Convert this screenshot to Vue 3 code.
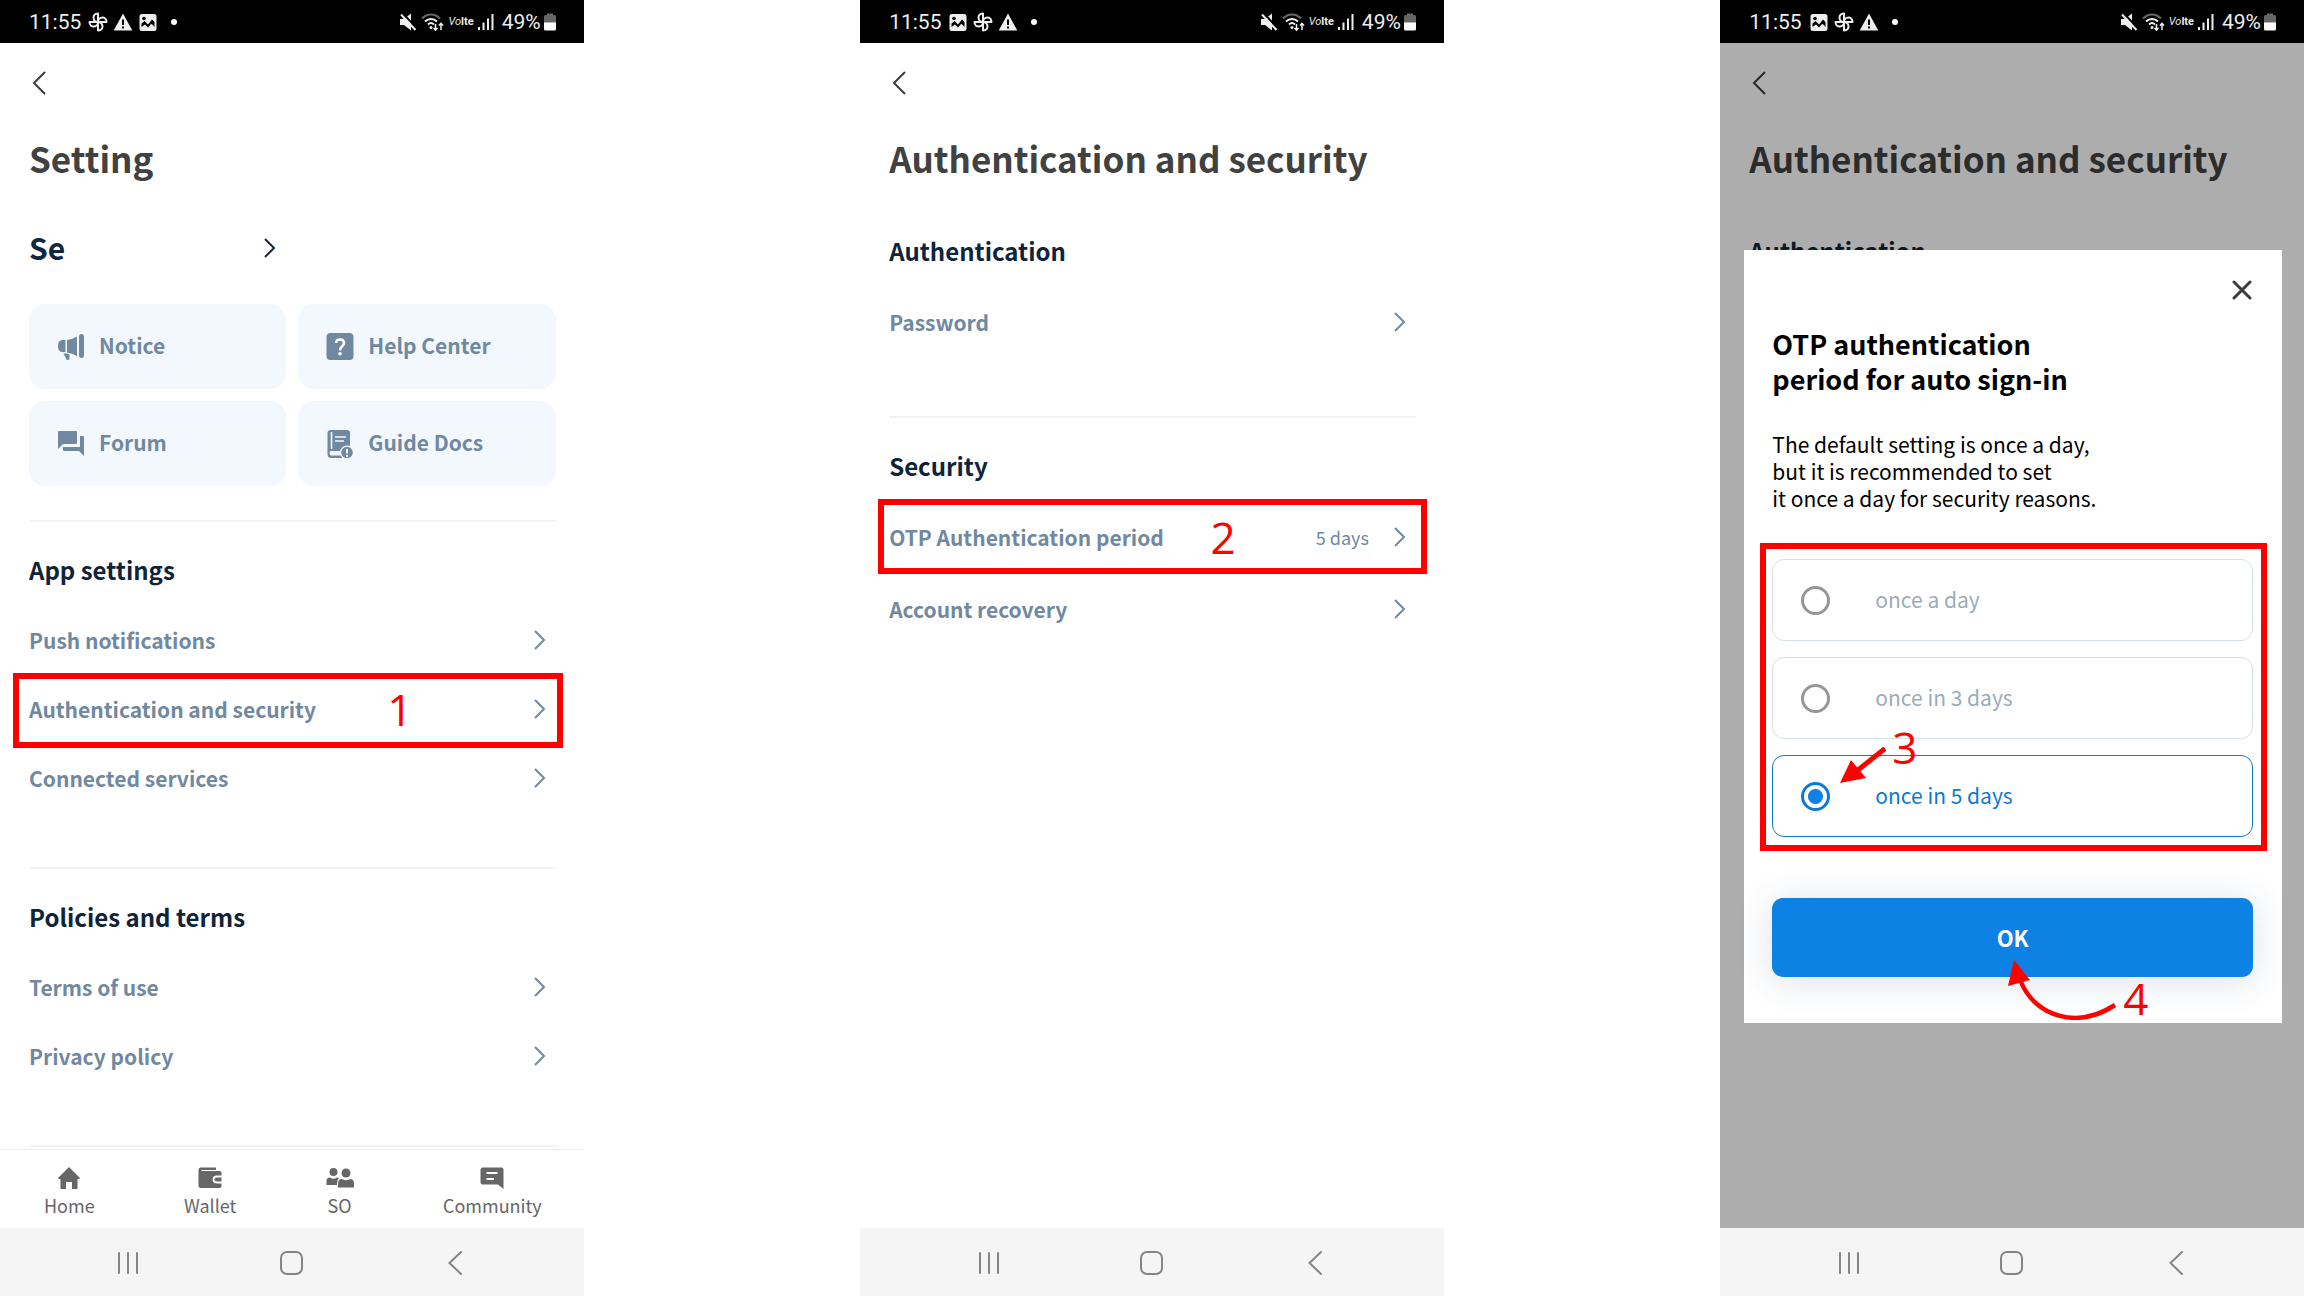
<script setup>
import { ref } from 'vue'

const authSections = [
  {
    title: 'Authentication',
    first: true,
    rows: [{ label: 'Password' }],
  },
  {
    title: 'Security',
    rows: [
      { label: 'OTP Authentication period', value: '5 days', mark: '2' },
      { label: 'Account recovery' },
    ],
  },
]

const phones = [
  {
    id: 'setting',
    title: 'Setting',
    notices: ['fan', 'warning', 'image'],
    home: true,
    sections: [
      {
        title: 'App settings',
        rows: [
          { label: 'Push notifications' },
          { label: 'Authentication and security', mark: '1' },
          { label: 'Connected services' },
        ],
      },
      {
        title: 'Policies and terms',
        rows: [{ label: 'Terms of use' }, { label: 'Privacy policy' }],
      },
    ],
  },
  {
    id: 'security',
    title: 'Authentication and security',
    notices: ['image', 'fan', 'warning'],
    sections: authSections,
  },
  {
    id: 'period',
    title: 'Authentication and security',
    notices: ['image', 'fan', 'warning'],
    sections: [{ title: 'Authentication', first: true, rows: [] }],
    dialog: true,
  },
]

const shortcuts = [
  { id: 'notice', label: 'Notice' },
  { id: 'help', label: 'Help Center' },
  { id: 'forum', label: 'Forum' },
  { id: 'docs', label: 'Guide Docs' },
]

const tabs = [
  { id: 'home', label: 'Home' },
  { id: 'wallet', label: 'Wallet' },
  { id: 'so', label: 'SO' },
  { id: 'community', label: 'Community' },
]

const options = ['once a day', 'once in 3 days', 'once in 5 days']
const period = ref('once in 5 days')
</script>

<template>
  <main class="board">
    <section v-for="phone in phones" :key="phone.id" class="phone" :class="phone.id">
      <div class="status">
        <span>11:55</span>
        <div class="notices">
          <template v-for="n in phone.notices" :key="n">
            <svg v-if="n === 'fan'" width="20" height="20" viewBox="0 0 20 20" fill="none" stroke="#eee" stroke-width="2" stroke-linejoin="round">
              <path d="M10 10V1.500C6.500 1.500 5.500 4 5.500 5.500C5.500 8 7.500 10 10 10Z" />
              <path d="M10 10H18.500C18.500 6.500 16 5.500 14.500 5.500C12 5.500 10 7.500 10 10Z" />
              <path d="M10 10V18.500C13.500 18.500 14.500 16 14.500 14.500C14.500 12 12.500 10 10 10Z" />
              <path d="M10 10H1.500C1.500 13.500 4 14.500 5.500 14.500C8 14.500 10 12.500 10 10Z" />
            </svg>
            <svg v-else-if="n === 'warning'" width="20" height="20" viewBox="0 0 20 20">
              <path d="M10 1.500 19.300 18.500H.700Z" fill="#eee" />
              <path d="M10 7.500V13M10 14.500V16.500" stroke="#000" stroke-width="2" />
            </svg>
            <svg v-else width="20" height="20" viewBox="0 0 20 20">
              <rect x="1.500" y="2" width="17" height="17" rx="2.500" fill="#eee" />
              <path d="M3.500 15V11.500L6.500 9 10 12.500 14 7.500 16.500 10V15C15 13 14 12 13 12L10 15.500 7 12.500Z" fill="#000" />
              <circle cx="6" cy="6.500" r="1.800" fill="#000" />
            </svg>
          </template>
        </div>
        <svg class="dot" width="6" height="6" viewBox="0 0 6 6"><circle cx="3" cy="3" r="3" fill="#fff" /></svg>
        <div class="signals">
          <svg width="18" height="18" viewBox="0 0 18 18">
            <path d="M1 6H5L12 .500V17.500L5 12H1Z" fill="#eee" />
            <path d="M3.500 0 18 15.500" stroke="#000" stroke-width="2" />
            <path d="M2 1.500 16.500 17" stroke="#eee" stroke-width="2" />
          </svg>
          <svg width="23" height="20" viewBox="0 0 23 20" fill="none" stroke-width="2">
            <path d="M1 6.500C6 1 14 1 19 6.500" stroke="#666" />
            <path d="M4 9.500C7.500 6 12.500 6 16 9.500M7 12.500C9 10.500 11 10.500 13 12.500" stroke="#eee" />
            <circle cx="10" cy="15.500" r="1.500" fill="#eee" />
            <path d="M14.500 12V18M12.500 16 14.500 18.200 16.500 16M20 18V11.500M18 13.500 20 11.300 22 13.500" stroke="#eee" stroke-width="1.500" />
          </svg>
          <span class="lte"><i>Vo</i>lte</span>
          <svg width="16" height="18" viewBox="0 0 16 18" stroke="#eee" stroke-width="2">
            <path d="M1 14V17M5.500 9.500V17M10 5.500V17M14.500 1V17" />
          </svg>
          <span class="percent">49%</span>
          <svg width="12" height="18" viewBox="0 0 12 18">
            <path d="M3 .500H9V2H10.500Q12 2 12 3.500V10H0V3.500Q0 2 1.500 2H3Z" fill="#666" />
            <path d="M0 9.500H12V16Q12 17.500 10.500 17.500H1.500Q0 17.500 0 16Z" fill="#fff" />
          </svg>
        </div>
      </div>

      <div class="screen">
        <div class="content">
          <button class="back" type="button" aria-label="Back">
            <svg width="14" height="24" viewBox="0 0 14 24" fill="none" stroke="#3c3c3c" stroke-width="2">
              <path d="M13 1 2 12 13 23" />
            </svg>
          </button>
          <h1>{{ phone.title }}</h1>

          <template v-if="phone.home">
            <a class="profile" href="#">
              <span>Se</span>
              <svg width="12" height="20" viewBox="0 0 12 20" fill="none" stroke="#12263f" stroke-width="2">
                <path d="M1 1 10 10 1 19" />
              </svg>
            </a>
            <nav class="shortcuts">
              <a v-for="s in shortcuts" :key="s.id" href="#">
                <svg v-if="s.id === 'notice'" width="28" height="30" viewBox="0 0 28 30" fill="#7089a0">
                  <path d="M5.500 8H8.500V20H5.500Q1 20 1 14 1 8 5.500 8ZM10 8Q15 7.500 20 4.500V24Q15 21 10 20.500Z" />
                  <rect x="22" y="2" width="5" height="24" rx="2.500" />
                  <path d="M6.500 21.500H10Q12.500 21.500 12.500 23.500V26Q12.500 28 11 28T9 26.500Z" />
                </svg>
                <svg v-else-if="s.id === 'help'" width="28" height="30" viewBox="0 0 28 30">
                  <rect x=".500" y="1" width="27" height="27" rx="4" fill="#7089a0" />
                  <path d="M10 11Q10 7.500 14 7.500T18 11Q18 13 16 14.500 14 16 14 18.500" fill="none" stroke="#fff" stroke-width="2.600" />
                  <circle cx="14" cy="21.700" r="1.800" fill="#fff" />
                </svg>
                <svg v-else-if="s.id === 'forum'" width="28" height="30" viewBox="0 0 28 30" fill="#7089a0">
                  <path d="M2 2H19Q20 2 20 3V14Q20 15 19 15H6L1 20V3Q1 2 2 2ZM23 7H26Q27 7 27 8V27L22 22H7Q6 22 6 21V18H23Z" />
                </svg>
                <svg v-else width="28" height="30" viewBox="0 0 28 30">
                  <path d="M5 1H21Q24 1 24 4V22H5Q3.500 22 3.500 24T5 26.500H16V29H5Q1.500 29 1.500 25V4Q1.500 1 5 1Z" fill="#7089a0" />
                  <path d="M5.500 3V20M9 8H20M9 12H18" stroke="#f3f8fe" stroke-width="1.600" />
                  <circle cx="21" cy="23.500" r="7" fill="#f3f8fe" />
                  <circle cx="21" cy="23.500" r="5.800" fill="#7089a0" />
                  <path d="M21 20V24.500M21 26V28" stroke="#f3f8fe" stroke-width="2" />
                </svg>
                <span>{{ s.label }}</span>
              </a>
            </nav>
          </template>

          <section v-for="s in phone.sections" :key="s.title" class="group" :class="{ first: s.first }">
            <h2>{{ s.title }}</h2>
            <a v-for="r in s.rows" :key="r.label" class="row" :class="{ marked: r.mark }" href="#">
              <span>{{ r.label }}</span>
              <span v-if="r.value" class="value">{{ r.value }}</span>
              <svg width="12" height="20" viewBox="0 0 12 20" fill="none" stroke="#7089a0" stroke-width="2">
                <path d="M1 1 10 10 1 19" />
              </svg>
              <span v-if="r.mark" class="mark">{{ r.mark }}</span>
            </a>
          </section>
        </div>

        <nav v-if="phone.home" class="tabs">
          <a v-for="t in tabs" :key="t.id" href="#">
            <svg v-if="t.id === 'home'" width="24" height="24" viewBox="0 0 24 24" fill="#666">
              <path d="M12 1 23 12 22 13H20.500V23H15V16H9V23H3.500V13H2L1 12Z" />
            </svg>
            <svg v-else-if="t.id === 'wallet'" width="24" height="24" viewBox="0 0 24 24">
              <path d="M3 1.500H18V4H3.500V5H21.500Q23.500 5 23.500 7V20Q23.500 22 21.500 22H3Q.500 22 .500 20V4Q.500 1.500 3 1.500Z" fill="#666" />
              <path d="M24 10.500H19Q15.500 10.500 15.500 13.500T19 16.500H24" fill="none" stroke="#fff" stroke-width="1.800" />
            </svg>
            <svg v-else-if="t.id === 'so'" width="28" height="24" viewBox="0 0 28 24" fill="#666">
              <circle cx="7.500" cy="6" r="4" /><circle cx="20" cy="7" r="4.500" />
              <path d="M.500 19V15Q.500 11.500 4 11.500 7.500 14 11 11.500L13 12Q11 14 11 19ZM12 21.500V18Q12 13 16 13 20 15.500 24 13 28 13 28 18V21.500Z" />
            </svg>
            <svg v-else width="24" height="24" viewBox="0 0 24 24">
              <path d="M3 1.500H21.500Q23.500 1.500 23.500 3.500V23L18 18.500H3Q.500 18.500 .500 16V4Q.500 1.500 3 1.500Z" fill="#666" />
              <path d="M6.500 7H17.500M6.500 13H14" stroke="#fff" stroke-width="2.200" />
            </svg>
            <span>{{ t.label }}</span>
          </a>
        </nav>

        <div v-if="phone.dialog" class="backdrop">
          <form class="dialog" role="dialog" aria-labelledby="dialog-title" @submit.prevent>
            <button class="close" type="button" aria-label="Close">
              <svg width="20" height="20" viewBox="0 0 20 20" stroke="#3c3c3c" stroke-width="3" stroke-linecap="round">
                <path d="M2 2 18 18M18 2 2 18" />
              </svg>
            </button>
            <h3 id="dialog-title">OTP authentication<br />period for auto sign-in</h3>
            <p>The default setting is once a day,<br />but it is recommended to set<br />it once a day for security reasons.</p>
            <div class="options">
              <label v-for="o in options" :key="o" :class="{ on: period === o }">
                <input v-model="period" type="radio" name="period" :value="o" />
                <span>{{ o }}</span>
              </label>
              <div class="pointer three">
                <svg width="46" height="36" viewBox="0 0 46 36">
                  <path d="M45 1.500 18 23" stroke="#f00" stroke-width="5" />
                  <path d="M0 36 11 13 26 31Z" fill="#f00" />
                </svg>
                <span>3</span>
              </div>
            </div>
            <div class="submit">
              <button class="ok" type="submit">OK</button>
              <div class="pointer four">
                <svg width="112" height="60" viewBox="0 0 112 60">
                  <path d="M14 22C28 56 70 70 108 45" fill="none" stroke="#f00" stroke-width="4.500" />
                  <path d="M7 0 1 26 23 20Z" fill="#f00" />
                </svg>
                <span>4</span>
              </div>
            </div>
          </form>
        </div>
      </div>

      <div class="keys">
        <button type="button" aria-label="Recents">
          <svg width="24" height="24" viewBox="0 0 24 24" stroke="#858585" stroke-width="2" stroke-linecap="round">
            <path d="M3 2V22M12 2V22M21 2V22" />
          </svg>
        </button>
        <button type="button" aria-label="Home">
          <svg width="24" height="24" viewBox="0 0 24 24" fill="none" stroke="#858585" stroke-width="2">
            <rect x="1" y="1" width="21" height="22" rx="6" />
          </svg>
        </button>
        <button type="button" aria-label="Back">
          <svg width="24" height="24" viewBox="0 0 24 24" fill="none" stroke="#858585" stroke-width="2" stroke-linecap="round">
            <path d="M18 1 6.500 12 18 23" />
          </svg>
        </button>
      </div>
    </section>
  </main>
</template>

<style>
body {
  margin: 0;
  background: #fff;
}
</style>

<style scoped>
.board {
  display: grid;
  grid-template-columns: repeat(3, minmax(0, 1fr));
  column-gap: 12%;
  min-height: 100vh;
  font-family: "Noto Sans CJK KR", "Noto Sans", sans-serif;
}
.phone {
  display: flex;
  flex-direction: column;
}
a {
  color: inherit;
  text-decoration: none;
}
button {
  display: flex;
  align-items: center;
  justify-content: center;
  padding: 0;
  border: 0;
  background: none;
  font-family: inherit;
}
svg {
  flex: none;
}

.status {
  display: flex;
  align-items: center;
  height: 43px;
  box-sizing: border-box;
  padding: 0 28px 0 29px;
  background: #000;
  color: #eee;
  font-family: Roboto, sans-serif;
  font-size: 21px;
}
.notices {
  display: flex;
  gap: 5px;
  margin-left: 7px;
}
.dot {
  margin-left: 13px;
}
.signals {
  display: flex;
  align-items: center;
  gap: 4px;
  margin-left: auto;
}
.lte {
  font-size: 11px;
  font-weight: 700;
}
.lte i {
  font-weight: 400;
}
.percent {
  margin: 0 -1px 0 4px;
}

.screen {
  position: relative;
  display: flex;
  flex: 1;
  flex-direction: column;
}
.content {
  padding: 0 28px 0 29px;
}
.back {
  width: 32px;
  height: 40px;
  margin-top: 20px;
  margin-left: -6px;
}
h1 {
  margin: 26px 0 0;
  color: #414141;
  font-size: 35px;
  font-weight: 700;
  line-height: 58px;
  white-space: nowrap;
}
.profile {
  display: flex;
  align-items: center;
  justify-content: space-between;
  width: 247px;
  height: 50px;
  margin-top: 36px;
  color: #12263f;
  font-size: 30px;
  font-weight: 700;
}
.profile span {
  padding-bottom: 2px;
  line-height: 40px;
}
.shortcuts {
  display: grid;
  grid-template-columns: 1fr 1fr;
  gap: 12px;
  margin: 31px 0 34px;
}
.shortcuts a {
  display: flex;
  align-items: center;
  gap: 14px;
  height: 85px;
  box-sizing: border-box;
  padding-left: 28px;
  border-radius: 16px;
  background: #f3f8fe;
  color: #7089a0;
  font-size: 21px;
  font-weight: 700;
}
.shortcuts span {
  padding-bottom: 4px;
}
.group {
  padding: 28px 0 55px;
  border-top: 2px solid #f0f4f7;
}
.setting .group:last-child {
  border-bottom: 2px solid #f0f4f7;
}
h2 {
  margin: 0 0 15px;
  color: #0f2439;
  font-size: 24px;
  font-weight: 700;
  line-height: 40px;
}
.row {
  position: relative;
  display: flex;
  align-items: center;
  height: 69px;
  padding-right: 10px;
  color: #7089a0;
  font-size: 21px;
  font-weight: 700;
}
.row svg {
  margin-left: auto;
}
.security .row {
  height: 72px;
}
.group.first {
  margin-top: 16px;
  padding-bottom: 58px;
  border-top: 0;
}
.value {
  margin-left: auto;
  font-size: 18px;
  font-weight: 400;
}
.row .value + svg {
  margin-left: 25px;
}
.marked::after {
  content: "";
  position: absolute;
  inset: -1px -7px -5px -16px;
  border: 6px solid #f00;
}
.security .marked::after {
  inset: -2px -11px -1px -11px;
}
.mark,
.pointer {
  color: #f00;
  font-family: "Open Sans", "Noto Sans", sans-serif;
  font-size: 44px;
  font-weight: 400;
  line-height: 44px;
}
.mark {
  position: absolute;
  left: 68%;
}
.security .mark {
  left: 61%;
}

.tabs {
  display: flex;
  justify-content: space-between;
  height: 78px;
  margin-top: auto;
  padding: 0 42px 0 44px;
  border-top: 1px solid #e8eef1;
  color: #666;
  font-size: 18px;
}
.tabs a {
  display: flex;
  flex-direction: column;
  align-items: center;
  padding-top: 16px;
}
.tabs span {
  margin-top: 1px;
  line-height: 28px;
}
.keys {
  display: grid;
  grid-template-columns: repeat(3, 1fr);
  height: 68px;
  box-sizing: border-box;
  padding: 2px 8% 0;
  background: #f5f5f5;
}

.backdrop {
  position: absolute;
  inset: 0;
  background: rgba(0, 0, 0, 0.32);
}
.dialog {
  margin: 207px 22px 0 24px;
  padding: 20px 29px 46px 28px;
  background: #fff;
}
.close {
  width: 40px;
  height: 40px;
  margin: 0 -9px 0 auto;
}
h3 {
  margin: 16px 0 0;
  color: #000;
  font-size: 27px;
  font-weight: 700;
  line-height: 35px;
}
p {
  margin: 35px 0 0;
  color: #000;
  font-size: 21px;
  line-height: 27px;
}
.options {
  position: relative;
  display: flex;
  flex-direction: column;
  gap: 16px;
  margin: 31px -14px 0 -12px;
  padding: 10px 8px 8px 6px;
  border: 6px solid #f00;
}
.options label {
  display: flex;
  align-items: center;
  gap: 45px;
  box-sizing: border-box;
  height: 82px;
  padding-left: 28px;
  border: 1px solid #d7e0e9;
  border-radius: 12px;
  color: #9babbb;
  font-size: 21px;
}
.options span {
  padding-bottom: 2px;
}
.options label.on {
  border-color: #0d7ad0;
  color: #0d7ad0;
}
.options input {
  flex: none;
  width: 29px;
  height: 29px;
  margin: 0;
  border: 3px solid #969696;
  border-radius: 50%;
  appearance: none;
}
.options input:checked {
  border-color: #0d7ad0;
  background: radial-gradient(circle, #0d82e4 7px, transparent 8px);
}
.pointer {
  position: absolute;
  display: flex;
}
.three {
  left: 74px;
  bottom: 62px;
}
.three span {
  margin: -22px 0 0 6px;
}
.submit {
  position: relative;
  margin-top: 47px;
}
.ok {
  width: 100%;
  height: 79px;
  padding-bottom: 2px;
  border-radius: 11px;
  background: #0d82e4;
  box-shadow: 0 4px 36px rgba(30, 60, 110, 0.16);
  color: #fff;
  font-size: 22px;
  font-weight: 700;
}
.four {
  left: 235px;
  top: 62px;
}
.four span {
  margin: 16px 0 0 4px;
}
</style>
